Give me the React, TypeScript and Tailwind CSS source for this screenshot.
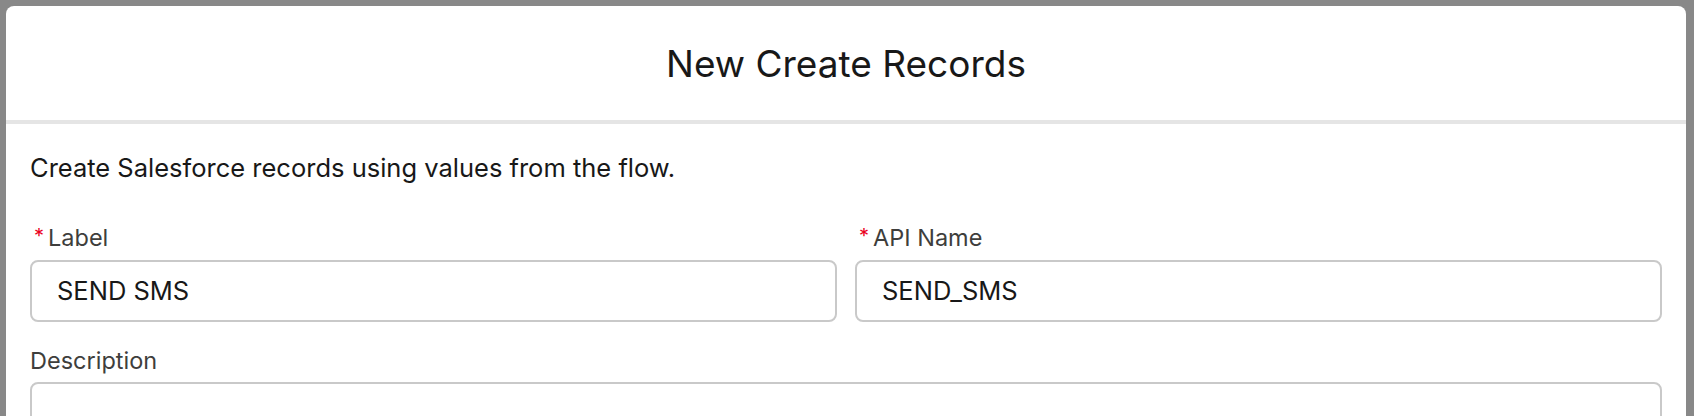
export default function App() {
  return (
    <div
      className="w-full h-[416px] bg-[#888888] pt-[6px] pl-[6px] pr-[8px] overflow-hidden"
      style={{ fontFamily: "Inter, 'Noto Sans', sans-serif" }}
    >
      {/* MODAL */}
      <div className="bg-white rounded-t-[8px] h-full">
        {/* Header */}
        <header className="h-[118px] flex items-center justify-center border-b-4 border-[#e5e5e5]">
          <h1 className="text-[37px] leading-[46px] text-[#181818] font-normal pt-[2px]">New Create Records</h1>
        </header>

        {/* Body */}
        <div className="px-[24px] pt-[28px]">
          <p className="text-[25.5px] leading-[32px] text-[#181818]">
            Create Salesforce records using values from the flow.
          </p>

          <div className="grid grid-cols-2 gap-[18px] mt-[40px]">
            <Field label="Label" value="SEND SMS" required />
            <Field label="API Name" value="SEND_SMS" required />
          </div>

          <div className="mt-[25px]">
            <label className="block text-[23.5px] leading-[28px] text-[#3e3e3c]">Description</label>
            <div className="mt-[7px] h-[80px] rounded-[8px] border-2 border-[#c9c9c9]" />
          </div>
        </div>
      </div>
    </div>
  );
}

function Field({ label, value, required }: { label: string; value: string; required?: boolean }) {
  return (
    <div>
      <label className="flex items-center text-[23.5px] leading-[28px] text-[#3e3e3c]">
        {required && <span className="text-[#ea001e] text-[20px] ml-[4px] mr-[4px] -mt-[4px]">*</span>}
        {label}
      </label>
      <div className="mt-[8px] h-[62px] rounded-[8px] border-2 border-[#c9c9c9] flex items-center px-[25px]">
        <span className="text-[25.5px] text-[#181818]">{value}</span>
      </div>
    </div>
  );
}
